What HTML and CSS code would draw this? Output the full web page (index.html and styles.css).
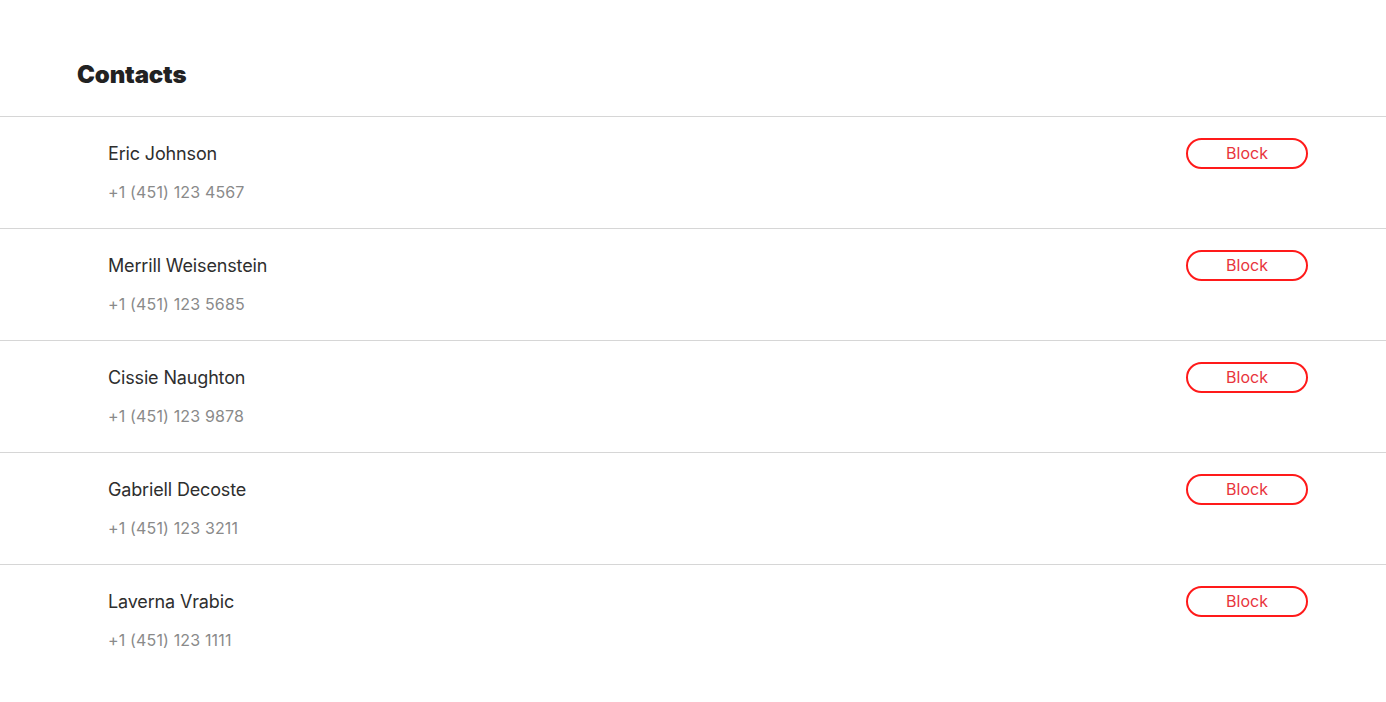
FILE: index.html
```html
<!DOCTYPE html>
<html lang="en">
<head>
    <meta charset="UTF-8">
    <meta name="viewport" content="width=device-width, initial-scale=1.0">
    <title>Contacts</title>
    <link rel="stylesheet" href="styles.css">
</head>
<body>
    <header class="page-header">
        <h1>Contacts</h1>
    </header>

    <ul class="contact-list">
        <li class="contact">
            <div class="contact-info">
                <p class="contact-name">Eric Johnson</p>
                <p class="contact-phone">+1 (451) 123 4567</p>
            </div>
            <button class="block-btn">Block</button>
        </li>
        <li class="contact">
            <div class="contact-info">
                <p class="contact-name">Merrill Weisenstein</p>
                <p class="contact-phone">+1 (451) 123 5685</p>
            </div>
            <button class="block-btn">Block</button>
        </li>
        <li class="contact">
            <div class="contact-info">
                <p class="contact-name">Cissie Naughton</p>
                <p class="contact-phone">+1 (451) 123 9878</p>
            </div>
            <button class="block-btn">Block</button>
        </li>
        <li class="contact">
            <div class="contact-info">
                <p class="contact-name">Gabriell Decoste</p>
                <p class="contact-phone">+1 (451) 123 3211</p>
            </div>
            <button class="block-btn">Block</button>
        </li>
        <li class="contact">
            <div class="contact-info">
                <p class="contact-name">Laverna Vrabic</p>
                <p class="contact-phone">+1 (451) 123 1111</p>
            </div>
            <button class="block-btn">Block</button>
        </li>
    </ul>
</body>
</html>
```

FILE: styles.css
```css
body {
    font-family: Inter, "Noto Sans", Arial, sans-serif;
    background-color: #fff;
    color: #2b2b2b;
    margin: 0;
    padding: 0;
}
.page-header {
    padding: 59px 77px 25px;
}
.page-header h1 {
    margin: 0;
    font-size: 24px;
    line-height: 32px;
    font-weight: 900;
    color: #222;
    letter-spacing: -0.15px;
}
.contact-list {
    list-style: none;
    margin: 0;
    padding: 0;
}
.contact {
    display: flex;
    justify-content: space-between;
    align-items: flex-start;
    border-top: 1px solid #d6d6d6;
    padding: 21px 78px 24px 108px;
}
.contact-info p {
    margin: 0;
}
.contact-name {
    font-size: 18px;
    line-height: 32px;
    color: #2e2e2e;
    letter-spacing: -0.15px;
}
.contact-phone {
    margin-top: 10px !important;
    font-size: 16px;
    line-height: 24px;
    color: #8a8a8a;
    letter-spacing: 0.15px;
}
.block-btn {
    width: 122px;
    height: 31px;
    padding: 0 0 1px;
    background: #fff;
    border: 2px solid #ff1a1a;
    border-radius: 16px;
    color: #e8343c;
    font-family: inherit;
    font-size: 16px;
    cursor: pointer;
}
.block-btn:hover {
    background-color: #fff3f3;
}
```
